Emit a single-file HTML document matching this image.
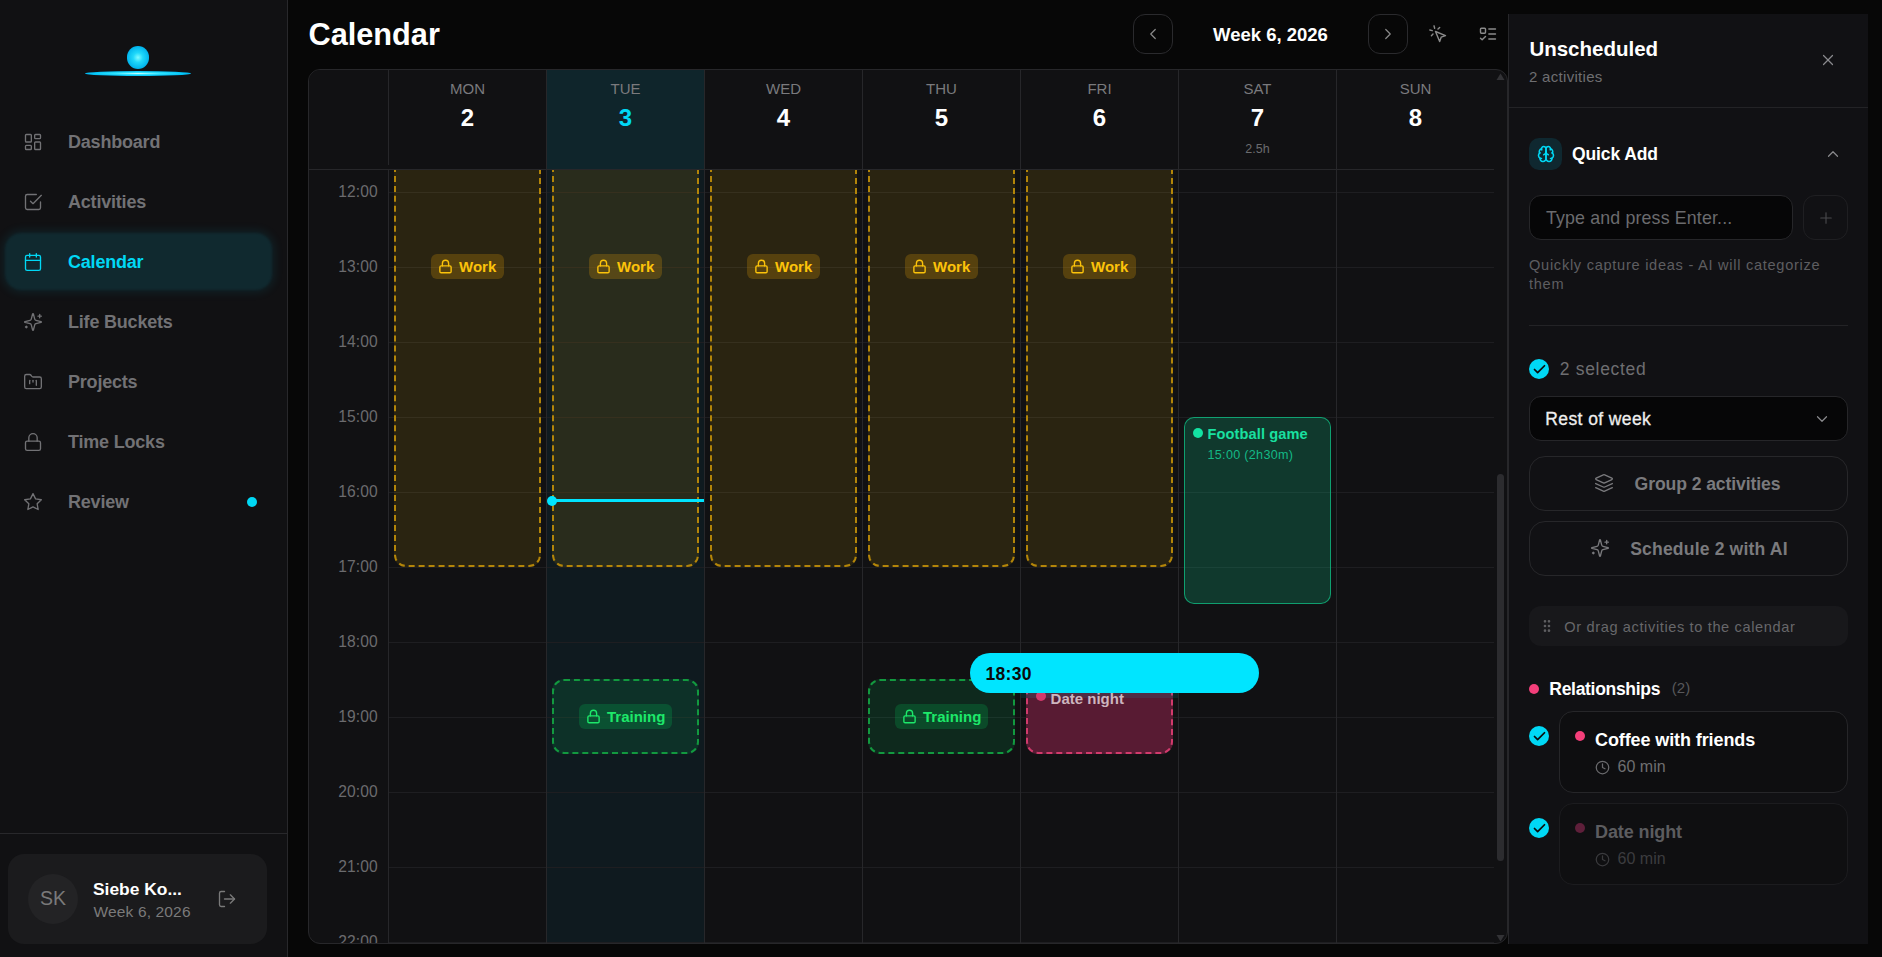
<!DOCTYPE html>
<html><head><meta charset="utf-8"><title>Calendar</title>
<style>
html,body{margin:0;padding:0;width:1882px;height:957px;overflow:hidden;background:#070707;font-family:"Liberation Sans", sans-serif;}
.t{position:absolute;line-height:1;white-space:nowrap;}
svg{display:block}
</style></head><body>
<div style="position:absolute;left:0px;top:0px;width:288px;height:957px;box-sizing:border-box;background:#111113;border-right:1px solid #28282b;"></div>
<div style="position:absolute;left:126.6px;top:46.2px;width:22.6px;height:22.6px;border-radius:50%;background:radial-gradient(circle at 50% 50%,#80faff 0%,#20d8fa 30%,#00b4ec 70%,#0a8ed0 100%);"></div>
<div style="position:absolute;left:85px;top:70.7px;width:106px;height:5px;border-radius:50%;background:radial-gradient(ellipse at 50% 50%,#c8ffff 0%,#30e4ff 30%,#00c0f4 65%,#0a90d8 90%,rgba(8,120,200,0.2) 100%);"></div>
<div style="position:absolute;left:5px;top:233px;width:267px;height:57px;border-radius:16px;background:#10292f;box-shadow:0 0 10px 3px rgba(0,190,220,0.09);filter:blur(1.2px);"></div>
<svg style="position:absolute;left:23.00px;top:132.00px;" width="20" height="20" viewBox="0 0 24 24" fill="none" stroke="#727275" stroke-width="1.6" stroke-linecap="round" stroke-linejoin="round"><rect width="7" height="9" x="3" y="3" rx="1"/><rect width="7" height="5" x="14" y="3" rx="1"/><rect width="7" height="9" x="14" y="12" rx="1"/><rect width="7" height="5" x="3" y="16" rx="1"/></svg>
<div class="t" style="left:68.00px;top:132.76px;font-size:18px;color:#727275;font-weight:700;letter-spacing:-0.2px;">Dashboard</div>
<svg style="position:absolute;left:23.00px;top:192.00px;" width="20" height="20" viewBox="0 0 24 24" fill="none" stroke="#727275" stroke-width="1.6" stroke-linecap="round" stroke-linejoin="round"><polyline points="9 11 12 14 22 4"/><path d="M21 12v7a2 2 0 0 1-2 2H5a2 2 0 0 1-2-2V5a2 2 0 0 1 2-2h11"/></svg>
<div class="t" style="left:68.00px;top:192.76px;font-size:18px;color:#727275;font-weight:700;letter-spacing:-0.2px;">Activities</div>
<svg style="position:absolute;left:23.00px;top:252.00px;" width="20" height="20" viewBox="0 0 24 24" fill="none" stroke="#00d8f5" stroke-width="1.6" stroke-linecap="round" stroke-linejoin="round"><rect width="18" height="18" x="3" y="4" rx="2"/><path d="M16 2v4"/><path d="M8 2v4"/><path d="M3 10h18"/></svg>
<div class="t" style="left:68.00px;top:252.76px;font-size:18px;color:#00d8f5;font-weight:700;letter-spacing:-0.2px;">Calendar</div>
<svg style="position:absolute;left:23.00px;top:312.00px;" width="20" height="20" viewBox="0 0 24 24" fill="none" stroke="#727275" stroke-width="1.6" stroke-linecap="round" stroke-linejoin="round"><path d="M9.937 15.5A2 2 0 0 0 8.5 14.063l-6.135-1.582a.5.5 0 0 1 0-.962L8.5 9.936A2 2 0 0 0 9.937 8.5l1.582-6.135a.5.5 0 0 1 .963 0L14.063 8.5A2 2 0 0 0 15.5 9.937l6.135 1.581a.5.5 0 0 1 0 .964L15.5 14.063a2 2 0 0 0-1.437 1.437l-1.582 6.135a.5.5 0 0 1-.963 0z"/><path d="M20 3v4"/><path d="M22 5h-4"/><path d="M4 17v2"/><path d="M5 18H3"/></svg>
<div class="t" style="left:68.00px;top:312.76px;font-size:18px;color:#727275;font-weight:700;letter-spacing:-0.2px;">Life Buckets</div>
<svg style="position:absolute;left:23.00px;top:372.00px;" width="20" height="20" viewBox="0 0 24 24" fill="none" stroke="#727275" stroke-width="1.6" stroke-linecap="round" stroke-linejoin="round"><path d="M4 20h16a2 2 0 0 0 2-2V8a2 2 0 0 0-2-2h-7.93a2 2 0 0 1-1.66-.9l-.82-1.2A2 2 0 0 0 7.93 3H4a2 2 0 0 0-2 2v13c0 1.1.9 2 2 2Z"/><path d="M8 10v4"/><path d="M12 10v2"/><path d="M16 10v6"/></svg>
<div class="t" style="left:68.00px;top:372.76px;font-size:18px;color:#727275;font-weight:700;letter-spacing:-0.2px;">Projects</div>
<svg style="position:absolute;left:23.00px;top:432.00px;" width="20" height="20" viewBox="0 0 24 24" fill="none" stroke="#727275" stroke-width="1.6" stroke-linecap="round" stroke-linejoin="round"><rect width="18" height="11" x="3" y="11" rx="2" ry="2"/><path d="M7 11V7a5 5 0 0 1 10 0v4"/></svg>
<div class="t" style="left:68.00px;top:432.76px;font-size:18px;color:#727275;font-weight:700;letter-spacing:-0.2px;">Time Locks</div>
<svg style="position:absolute;left:23.00px;top:492.00px;" width="20" height="20" viewBox="0 0 24 24" fill="none" stroke="#727275" stroke-width="1.6" stroke-linecap="round" stroke-linejoin="round"><polygon points="12 2 15.09 8.26 22 9.27 17 14.14 18.18 21.02 12 17.77 5.82 21.02 7 14.14 2 9.27 8.91 8.26 12 2"/></svg>
<div class="t" style="left:68.00px;top:492.76px;font-size:18px;color:#727275;font-weight:700;letter-spacing:-0.2px;">Review</div>
<div style="position:absolute;left:247px;top:497px;width:10px;height:10px;border-radius:50%;background:#00d8f5;"></div>
<div style="position:absolute;left:0px;top:833px;width:287px;height:1px;box-sizing:border-box;background:#28282b;"></div>
<div style="position:absolute;left:8px;top:854px;width:259px;height:90px;box-sizing:border-box;background:#1b1b1d;border-radius:16px;"></div>
<div style="position:absolute;left:28px;top:873.5px;width:50px;height:50px;border-radius:50%;background:#232325;"></div>
<div class="t" style="left:-447.00px;width:1000px;text-align:center;top:888.99px;font-size:19.5px;color:#7a7a7a;font-weight:400;letter-spacing:0px;">SK</div>
<div class="t" style="left:93.00px;top:881.27px;font-size:17.4px;color:#fff;font-weight:700;letter-spacing:0px;">Siebe Ko...</div>
<div class="t" style="left:93.50px;top:903.68px;font-size:15.5px;color:#7a7a7a;font-weight:400;letter-spacing:0.15px;">Week 6, 2026</div>
<svg style="position:absolute;left:217.00px;top:889.00px;" width="20" height="20" viewBox="0 0 24 24" fill="none" stroke="#7a7a7a" stroke-width="1.6" stroke-linecap="round" stroke-linejoin="round"><path d="M9 21H5a2 2 0 0 1-2-2V5a2 2 0 0 1 2-2h4"/><polyline points="16 17 21 12 16 7"/><line x1="21" x2="9" y1="12" y2="12"/></svg>
<div class="t" style="left:308.50px;top:19.81px;font-size:30.7px;color:#fff;font-weight:700;letter-spacing:0px;">Calendar</div>
<div style="position:absolute;left:1133px;top:14px;width:40px;height:40px;box-sizing:border-box;border:1px solid #2a2a2d;border-radius:12px;"></div>
<svg style="position:absolute;left:1144.00px;top:25.00px;" width="18" height="18" viewBox="0 0 24 24" fill="none" stroke="#8a8a8a" stroke-width="1.6" stroke-linecap="round" stroke-linejoin="round"><path d="m15 18-6-6 6-6"/></svg>
<div class="t" style="left:1213.00px;top:25.54px;font-size:18.5px;color:#fff;font-weight:700;letter-spacing:0px;">Week 6, 2026</div>
<div style="position:absolute;left:1368px;top:14px;width:40px;height:40px;box-sizing:border-box;border:1px solid #2a2a2d;border-radius:12px;"></div>
<svg style="position:absolute;left:1379.00px;top:25.00px;" width="18" height="18" viewBox="0 0 24 24" fill="none" stroke="#8a8a8a" stroke-width="1.6" stroke-linecap="round" stroke-linejoin="round"><path d="m9 18 6-6-6-6"/></svg>
<svg style="position:absolute;left:1427.70px;top:23.50px;" width="20" height="20" viewBox="0 0 24 24" fill="none" stroke="#8a8a8a" stroke-width="1.7" stroke-linecap="round" stroke-linejoin="round"><path d="m9 9 5 12 1.8-5.2L21 14Z"/><path d="M7.2 2.2 8 5.1"/><path d="m5.1 8-2.9-.8"/><path d="M14 4.1 12 6"/><path d="m6 12-1.9 2"/></svg>
<svg style="position:absolute;left:1477.50px;top:24.00px;" width="20" height="20" viewBox="0 0 24 24" fill="none" stroke="#8a8a8a" stroke-width="1.7" stroke-linecap="round" stroke-linejoin="round"><rect x="3" y="5" width="6" height="6" rx="1"/><path d="m3 17 2 2 4-4"/><path d="M13 6h8"/><path d="M13 12h8"/><path d="M13 18h8"/></svg>
<div style="position:absolute;left:308px;top:69px;width:1200px;height:875px;box-sizing:border-box;background:#111113;border:1px solid #27272a;border-radius:12px;"></div>
<div style="position:absolute;left:309px;top:70px;width:1198px;height:873px;overflow:hidden;border-radius:11px;">
<div style="position:absolute;left:238px;top:100px;width:157px;height:773px;box-sizing:border-box;background:#0f1a1f;"></div>
<div style="position:absolute;left:80px;top:47px;width:1105px;height:1px;box-sizing:border-box;background:#1e1e21;"></div>
<div style="position:absolute;left:80px;top:122px;width:1105px;height:1px;box-sizing:border-box;background:#1e1e21;"></div>
<div style="position:absolute;left:80px;top:197px;width:1105px;height:1px;box-sizing:border-box;background:#1e1e21;"></div>
<div style="position:absolute;left:80px;top:272px;width:1105px;height:1px;box-sizing:border-box;background:#1e1e21;"></div>
<div style="position:absolute;left:80px;top:347px;width:1105px;height:1px;box-sizing:border-box;background:#1e1e21;"></div>
<div style="position:absolute;left:80px;top:422px;width:1105px;height:1px;box-sizing:border-box;background:#1e1e21;"></div>
<div style="position:absolute;left:80px;top:497px;width:1105px;height:1px;box-sizing:border-box;background:#1e1e21;"></div>
<div style="position:absolute;left:80px;top:572px;width:1105px;height:1px;box-sizing:border-box;background:#1e1e21;"></div>
<div style="position:absolute;left:80px;top:647px;width:1105px;height:1px;box-sizing:border-box;background:#1e1e21;"></div>
<div style="position:absolute;left:80px;top:722px;width:1105px;height:1px;box-sizing:border-box;background:#1e1e21;"></div>
<div style="position:absolute;left:80px;top:797px;width:1105px;height:1px;box-sizing:border-box;background:#1e1e21;"></div>
<div style="position:absolute;left:80px;top:872px;width:1105px;height:1px;box-sizing:border-box;background:#1e1e21;"></div>
<div style="position:absolute;left:79px;top:100px;width:1px;height:773px;box-sizing:border-box;background:#27272a;"></div>
<div style="position:absolute;left:237px;top:100px;width:1px;height:773px;box-sizing:border-box;background:#27272a;"></div>
<div style="position:absolute;left:395px;top:100px;width:1px;height:773px;box-sizing:border-box;background:#27272a;"></div>
<div style="position:absolute;left:553px;top:100px;width:1px;height:773px;box-sizing:border-box;background:#27272a;"></div>
<div style="position:absolute;left:711px;top:100px;width:1px;height:773px;box-sizing:border-box;background:#27272a;"></div>
<div style="position:absolute;left:869px;top:100px;width:1px;height:773px;box-sizing:border-box;background:#27272a;"></div>
<div style="position:absolute;left:1027px;top:100px;width:1px;height:773px;box-sizing:border-box;background:#27272a;"></div>
</div>
<div style="position:absolute;left:309px;top:170px;width:1185px;height:773px;overflow:hidden;">
<div style="position:absolute;left:85px;top:-203px;width:147px;height:600px;box-sizing:border-box;border:2px dashed #b38509;border-radius:12px;background:rgba(234,179,8,0.12);"></div>
<div style="position:absolute;left:122.0px;top:84.0px;width:73px;height:25px;border-radius:6px;background:rgba(230,160,8,0.24);"></div>
<svg style="position:absolute;left:129.3px;top:88.7px" width="15" height="15" viewBox="0 0 24 24" fill="none" stroke="#fcc30a" stroke-width="2.2" stroke-linecap="round" stroke-linejoin="round"><rect width="18" height="11" x="3" y="11" rx="2" ry="2"/><path d="M7 11V7a5 5 0 0 1 10 0v4"/></svg>
<div class="t" style="left:150.0px;top:89.30px;font-size:15px;font-weight:700;color:#fcc30a;">Work</div>
<div style="position:absolute;left:243px;top:-203px;width:147px;height:600px;box-sizing:border-box;border:2px dashed #b38509;border-radius:12px;background:rgba(234,179,8,0.12);"></div>
<div style="position:absolute;left:280.0px;top:84.0px;width:73px;height:25px;border-radius:6px;background:rgba(230,160,8,0.24);"></div>
<svg style="position:absolute;left:287.3px;top:88.7px" width="15" height="15" viewBox="0 0 24 24" fill="none" stroke="#fcc30a" stroke-width="2.2" stroke-linecap="round" stroke-linejoin="round"><rect width="18" height="11" x="3" y="11" rx="2" ry="2"/><path d="M7 11V7a5 5 0 0 1 10 0v4"/></svg>
<div class="t" style="left:308.0px;top:89.30px;font-size:15px;font-weight:700;color:#fcc30a;">Work</div>
<div style="position:absolute;left:401px;top:-203px;width:147px;height:600px;box-sizing:border-box;border:2px dashed #b38509;border-radius:12px;background:rgba(234,179,8,0.12);"></div>
<div style="position:absolute;left:438.0px;top:84.0px;width:73px;height:25px;border-radius:6px;background:rgba(230,160,8,0.24);"></div>
<svg style="position:absolute;left:445.3px;top:88.7px" width="15" height="15" viewBox="0 0 24 24" fill="none" stroke="#fcc30a" stroke-width="2.2" stroke-linecap="round" stroke-linejoin="round"><rect width="18" height="11" x="3" y="11" rx="2" ry="2"/><path d="M7 11V7a5 5 0 0 1 10 0v4"/></svg>
<div class="t" style="left:466.0px;top:89.30px;font-size:15px;font-weight:700;color:#fcc30a;">Work</div>
<div style="position:absolute;left:559px;top:-203px;width:147px;height:600px;box-sizing:border-box;border:2px dashed #b38509;border-radius:12px;background:rgba(234,179,8,0.12);"></div>
<div style="position:absolute;left:596.0px;top:84.0px;width:73px;height:25px;border-radius:6px;background:rgba(230,160,8,0.24);"></div>
<svg style="position:absolute;left:603.3px;top:88.7px" width="15" height="15" viewBox="0 0 24 24" fill="none" stroke="#fcc30a" stroke-width="2.2" stroke-linecap="round" stroke-linejoin="round"><rect width="18" height="11" x="3" y="11" rx="2" ry="2"/><path d="M7 11V7a5 5 0 0 1 10 0v4"/></svg>
<div class="t" style="left:624.0px;top:89.30px;font-size:15px;font-weight:700;color:#fcc30a;">Work</div>
<div style="position:absolute;left:717px;top:-203px;width:147px;height:600px;box-sizing:border-box;border:2px dashed #b38509;border-radius:12px;background:rgba(234,179,8,0.12);"></div>
<div style="position:absolute;left:754.0px;top:84.0px;width:73px;height:25px;border-radius:6px;background:rgba(230,160,8,0.24);"></div>
<svg style="position:absolute;left:761.3px;top:88.7px" width="15" height="15" viewBox="0 0 24 24" fill="none" stroke="#fcc30a" stroke-width="2.2" stroke-linecap="round" stroke-linejoin="round"><rect width="18" height="11" x="3" y="11" rx="2" ry="2"/><path d="M7 11V7a5 5 0 0 1 10 0v4"/></svg>
<div class="t" style="left:782.0px;top:89.30px;font-size:15px;font-weight:700;color:#fcc30a;">Work</div>
<div style="position:absolute;left:243px;top:509px;width:147px;height:75px;box-sizing:border-box;border:2px dashed #12993f;border-radius:12px;background:rgba(0,225,110,0.12);"></div>
<div style="position:absolute;left:270.0px;top:534.0px;width:93px;height:25px;border-radius:6px;background:rgba(0,210,90,0.2);"></div>
<svg style="position:absolute;left:277.3px;top:538.7px" width="15" height="15" viewBox="0 0 24 24" fill="none" stroke="#1de86a" stroke-width="2.2" stroke-linecap="round" stroke-linejoin="round"><rect width="18" height="11" x="3" y="11" rx="2" ry="2"/><path d="M7 11V7a5 5 0 0 1 10 0v4"/></svg>
<div class="t" style="left:298.0px;top:539.30px;font-size:15px;font-weight:700;color:#1de86a;">Training</div>
<div style="position:absolute;left:559px;top:509px;width:147px;height:75px;box-sizing:border-box;border:2px dashed #12993f;border-radius:12px;background:rgba(0,225,110,0.12);"></div>
<div style="position:absolute;left:586.0px;top:534.0px;width:93px;height:25px;border-radius:6px;background:rgba(0,210,90,0.2);"></div>
<svg style="position:absolute;left:593.3px;top:538.7px" width="15" height="15" viewBox="0 0 24 24" fill="none" stroke="#1de86a" stroke-width="2.2" stroke-linecap="round" stroke-linejoin="round"><rect width="18" height="11" x="3" y="11" rx="2" ry="2"/><path d="M7 11V7a5 5 0 0 1 10 0v4"/></svg>
<div class="t" style="left:614.0px;top:539.30px;font-size:15px;font-weight:700;color:#1de86a;">Training</div>
<div style="position:absolute;left:717px;top:509px;width:147px;height:75px;box-sizing:border-box;border:2px dashed #d13a6c;border-radius:12px;background:#581b33;"></div>
<div style="position:absolute;left:712px;top:523px;width:157px;height:5px;box-sizing:border-box;background:rgba(0,229,255,0.09);"></div>
<div style="position:absolute;left:727px;top:521px;width:10px;height:10px;border-radius:50%;background:#d23a6c;"></div>
<div class="t" style="left:741.60px;top:521.30px;font-size:15px;color:#cdb5bf;font-weight:700;letter-spacing:0px;">Date night</div>
<div style="position:absolute;left:875px;top:247px;width:147px;height:186.5px;box-sizing:border-box;border:1px solid rgba(16,185,129,0.8);border-radius:10px;background:rgba(16,185,129,0.245);"></div>
<div style="position:absolute;left:884px;top:258px;width:10px;height:10px;border-radius:50%;background:#13e2a2;"></div>
<div class="t" style="left:898.50px;top:257.44px;font-size:14.6px;color:#19e0a0;font-weight:700;letter-spacing:0.1px;">Football game</div>
<div class="t" style="left:898.50px;top:279.13px;font-size:12.6px;color:#14b886;font-weight:400;letter-spacing:0.3px;">15:00 (2h30m)</div>
<div style="position:absolute;left:243px;top:329px;width:152px;height:3px;box-sizing:border-box;background:#00e5ff;"></div>
<div style="position:absolute;left:238px;top:326px;width:10px;height:10px;border-radius:50%;background:#00e5ff;"></div>
<div style="position:absolute;left:661px;top:483px;width:289px;height:40px;box-sizing:border-box;background:#00e5ff;border-radius:20px;"></div>
<div class="t" style="left:676.50px;top:495.69px;font-size:17.5px;color:#0b0b0b;font-weight:700;letter-spacing:0.3px;">18:30</div>
<div class="t" style="left:-931.40px;width:1000px;text-align:right;top:13.79px;font-size:15.6px;color:#6b6b6e;font-weight:400;letter-spacing:0.05px;">12:00</div>
<div class="t" style="left:-931.40px;width:1000px;text-align:right;top:88.79px;font-size:15.6px;color:#6b6b6e;font-weight:400;letter-spacing:0.05px;">13:00</div>
<div class="t" style="left:-931.40px;width:1000px;text-align:right;top:163.79px;font-size:15.6px;color:#6b6b6e;font-weight:400;letter-spacing:0.05px;">14:00</div>
<div class="t" style="left:-931.40px;width:1000px;text-align:right;top:238.79px;font-size:15.6px;color:#6b6b6e;font-weight:400;letter-spacing:0.05px;">15:00</div>
<div class="t" style="left:-931.40px;width:1000px;text-align:right;top:313.79px;font-size:15.6px;color:#6b6b6e;font-weight:400;letter-spacing:0.05px;">16:00</div>
<div class="t" style="left:-931.40px;width:1000px;text-align:right;top:388.79px;font-size:15.6px;color:#6b6b6e;font-weight:400;letter-spacing:0.05px;">17:00</div>
<div class="t" style="left:-931.40px;width:1000px;text-align:right;top:463.79px;font-size:15.6px;color:#6b6b6e;font-weight:400;letter-spacing:0.05px;">18:00</div>
<div class="t" style="left:-931.40px;width:1000px;text-align:right;top:538.79px;font-size:15.6px;color:#6b6b6e;font-weight:400;letter-spacing:0.05px;">19:00</div>
<div class="t" style="left:-931.40px;width:1000px;text-align:right;top:613.79px;font-size:15.6px;color:#6b6b6e;font-weight:400;letter-spacing:0.05px;">20:00</div>
<div class="t" style="left:-931.40px;width:1000px;text-align:right;top:688.79px;font-size:15.6px;color:#6b6b6e;font-weight:400;letter-spacing:0.05px;">21:00</div>
<div class="t" style="left:-931.40px;width:1000px;text-align:right;top:763.79px;font-size:15.6px;color:#6b6b6e;font-weight:400;letter-spacing:0.05px;">22:00</div>
</div>
<div style="position:absolute;left:309px;top:70px;width:1185px;height:100px;overflow:hidden;border-top-left-radius:11px;background:#111113;">
<div style="position:absolute;left:238px;top:0px;width:157px;height:99px;box-sizing:border-box;background:#0f252b;"></div>
<div style="position:absolute;left:0px;top:99px;width:1185px;height:1px;box-sizing:border-box;background:#27272a;"></div>
<div style="position:absolute;left:79px;top:0px;width:1px;height:95px;box-sizing:border-box;background:#27272a;"></div>
<div style="position:absolute;left:237px;top:0px;width:1px;height:99px;box-sizing:border-box;background:#27272a;"></div>
<div style="position:absolute;left:395px;top:0px;width:1px;height:99px;box-sizing:border-box;background:#27272a;"></div>
<div style="position:absolute;left:553px;top:0px;width:1px;height:99px;box-sizing:border-box;background:#27272a;"></div>
<div style="position:absolute;left:711px;top:0px;width:1px;height:99px;box-sizing:border-box;background:#27272a;"></div>
<div style="position:absolute;left:869px;top:0px;width:1px;height:99px;box-sizing:border-box;background:#27272a;"></div>
<div style="position:absolute;left:1027px;top:0px;width:1px;height:99px;box-sizing:border-box;background:#27272a;"></div>
</div>
<div class="t" style="left:-32.50px;width:1000px;text-align:center;top:81.00px;font-size:15px;color:#7a7a7d;font-weight:400;letter-spacing:0px;">MON</div>
<div class="t" style="left:-32.50px;width:1000px;text-align:center;top:105.98px;font-size:24px;color:#fff;font-weight:700;letter-spacing:0px;">2</div>
<div class="t" style="left:125.50px;width:1000px;text-align:center;top:81.00px;font-size:15px;color:#7a7a7d;font-weight:400;letter-spacing:0px;">TUE</div>
<div class="t" style="left:125.50px;width:1000px;text-align:center;top:105.98px;font-size:24px;color:#00d8f5;font-weight:700;letter-spacing:0px;">3</div>
<div class="t" style="left:283.50px;width:1000px;text-align:center;top:81.00px;font-size:15px;color:#7a7a7d;font-weight:400;letter-spacing:0px;">WED</div>
<div class="t" style="left:283.50px;width:1000px;text-align:center;top:105.98px;font-size:24px;color:#fff;font-weight:700;letter-spacing:0px;">4</div>
<div class="t" style="left:441.50px;width:1000px;text-align:center;top:81.00px;font-size:15px;color:#7a7a7d;font-weight:400;letter-spacing:0px;">THU</div>
<div class="t" style="left:441.50px;width:1000px;text-align:center;top:105.98px;font-size:24px;color:#fff;font-weight:700;letter-spacing:0px;">5</div>
<div class="t" style="left:599.50px;width:1000px;text-align:center;top:81.00px;font-size:15px;color:#7a7a7d;font-weight:400;letter-spacing:0px;">FRI</div>
<div class="t" style="left:599.50px;width:1000px;text-align:center;top:105.98px;font-size:24px;color:#fff;font-weight:700;letter-spacing:0px;">6</div>
<div class="t" style="left:757.50px;width:1000px;text-align:center;top:81.00px;font-size:15px;color:#7a7a7d;font-weight:400;letter-spacing:0px;">SAT</div>
<div class="t" style="left:757.50px;width:1000px;text-align:center;top:105.98px;font-size:24px;color:#fff;font-weight:700;letter-spacing:0px;">7</div>
<div class="t" style="left:915.50px;width:1000px;text-align:center;top:81.00px;font-size:15px;color:#7a7a7d;font-weight:400;letter-spacing:0px;">SUN</div>
<div class="t" style="left:915.50px;width:1000px;text-align:center;top:105.98px;font-size:24px;color:#fff;font-weight:700;letter-spacing:0px;">8</div>
<div class="t" style="left:757.50px;width:1000px;text-align:center;top:143.22px;font-size:12.5px;color:#6b6b6e;font-weight:400;letter-spacing:0px;">2.5h</div>
<div style="position:absolute;left:1497px;top:474px;width:7px;height:387px;box-sizing:border-box;background:#2c2c2f;border-radius:4px;"></div>
<svg style="position:absolute;left:1496px;top:73px" width="9" height="8"><polygon points="4.5,0.5 8.5,7 0.5,7" fill="#333336"/></svg>
<svg style="position:absolute;left:1496px;top:934px" width="9" height="8"><polygon points="0.5,1 8.5,1 4.5,7.5" fill="#333336"/></svg>
<div style="position:absolute;left:1508px;top:14px;width:360px;height:930px;box-sizing:border-box;background:#111114;border-left:1px solid #27272a;"></div>
<div class="t" style="left:1529.40px;top:38.75px;font-size:20.5px;color:#fff;font-weight:700;letter-spacing:0px;">Unscheduled</div>
<div class="t" style="left:1529.00px;top:69.00px;font-size:15px;color:#6e6e71;font-weight:400;letter-spacing:0.3px;">2 activities</div>
<svg style="position:absolute;left:1819.00px;top:51.00px;" width="18" height="18" viewBox="0 0 24 24" fill="none" stroke="#8a8a8d" stroke-width="1.6" stroke-linecap="round" stroke-linejoin="round"><path d="M18 6 6 18"/><path d="m6 6 12 12"/></svg>
<div style="position:absolute;left:1509px;top:107px;width:359px;height:1px;box-sizing:border-box;background:#232326;"></div>
<div style="position:absolute;left:1529px;top:138px;width:33px;height:32px;box-sizing:border-box;background:#0f2830;border-radius:10px;"></div>
<svg style="position:absolute;left:1536.80px;top:145.00px;" width="18" height="18" viewBox="0 0 24 24" fill="none" stroke="#00d8f5" stroke-width="2.1" stroke-linecap="round" stroke-linejoin="round"><path d="M12 5a3 3 0 1 0-5.997.125 4 4 0 0 0-2.526 5.77 4 4 0 0 0 .556 6.588A4 4 0 1 0 12 18Z"/><path d="M12 5a3 3 0 1 1 5.997.125 4 4 0 0 1 2.526 5.77 4 4 0 0 1-.556 6.588A4 4 0 1 1 12 18Z"/><path d="M15 13a4.5 4.5 0 0 1-3-4 4.5 4.5 0 0 1-3 4"/><path d="M17.599 6.5a3 3 0 0 0 .399-1.375"/><path d="M6.003 5.125A3 3 0 0 0 6.401 6.5"/><path d="M3.477 10.896a4 4 0 0 1 .585-.396"/><path d="M19.938 10.5a4 4 0 0 1 .585.396"/><path d="M6 18a4 4 0 0 1-1.967-.516"/><path d="M19.967 17.484A4 4 0 0 1 18 18"/></svg>
<div class="t" style="left:1572.00px;top:145.79px;font-size:17.5px;color:#fff;font-weight:700;letter-spacing:-0.1px;">Quick Add</div>
<svg style="position:absolute;left:1824.00px;top:145.00px;" width="18" height="18" viewBox="0 0 24 24" fill="none" stroke="#8a8a8d" stroke-width="1.6" stroke-linecap="round" stroke-linejoin="round"><path d="m18 15-6-6-6 6"/></svg>
<div style="position:absolute;left:1529px;top:195px;width:264px;height:45px;box-sizing:border-box;background:#060607;border:1px solid #262629;border-radius:12px;"></div>
<div class="t" style="left:1546.00px;top:209.73px;font-size:17.8px;color:#6b6b6e;font-weight:400;letter-spacing:0.15px;">Type and press Enter...</div>
<div style="position:absolute;left:1803px;top:195px;width:45px;height:45px;box-sizing:border-box;border:1px solid #1f1f22;border-radius:12px;"></div>
<svg style="position:absolute;left:1817.00px;top:209.00px;" width="18" height="18" viewBox="0 0 24 24" fill="none" stroke="#4a4a4d" stroke-width="1.5" stroke-linecap="round" stroke-linejoin="round"><path d="M5 12h14"/><path d="M12 5v14"/></svg>
<div class="t" style="left:1529.00px;top:257.64px;font-size:14.6px;color:#5e5e61;font-weight:400;letter-spacing:0.72px;">Quickly capture ideas - AI will categorize</div>
<div class="t" style="left:1529.00px;top:277.14px;font-size:14.6px;color:#5e5e61;font-weight:400;letter-spacing:0.72px;">them</div>
<div style="position:absolute;left:1529px;top:325px;width:319px;height:1px;box-sizing:border-box;background:#232326;"></div>
<div style="position:absolute;left:1529px;top:359px;width:20px;height:20px;border-radius:50%;background:#00d8f5;"></div>
<svg style="position:absolute;left:1531.50px;top:362.00px;" width="15" height="15" viewBox="0 0 24 24" fill="none" stroke="#0b0b0b" stroke-width="2.8" stroke-linecap="round" stroke-linejoin="round"><path d="M20 6 9 17l-5-5"/></svg>
<div class="t" style="left:1559.70px;top:360.99px;font-size:17.5px;color:#6e6e71;font-weight:400;letter-spacing:0.7px;">2 selected</div>
<div style="position:absolute;left:1529px;top:396px;width:319px;height:45px;box-sizing:border-box;background:#060607;border:1px solid #262629;border-radius:12px;"></div>
<div class="t" style="left:1545.30px;top:410.69px;font-size:17.5px;color:#eeeeee;font-weight:400;letter-spacing:0.4px;-webkit-text-stroke:0.3px #eeeeee;">Rest of week</div>
<svg style="position:absolute;left:1813.00px;top:410.00px;" width="18" height="18" viewBox="0 0 24 24" fill="none" stroke="#8a8a8d" stroke-width="1.6" stroke-linecap="round" stroke-linejoin="round"><path d="m6 9 6 6 6-6"/></svg>
<div style="position:absolute;left:1529px;top:456px;width:319px;height:55px;box-sizing:border-box;border:1px solid #27272a;border-radius:16px;"></div>
<svg style="position:absolute;left:1594.00px;top:473.00px;" width="20" height="20" viewBox="0 0 24 24" fill="none" stroke="#7a7a7d" stroke-width="1.6" stroke-linecap="round" stroke-linejoin="round"><path d="m12.83 2.18a2 2 0 0 0-1.66 0L2.6 6.08a1 1 0 0 0 0 1.83l8.58 3.91a2 2 0 0 0 1.66 0l8.58-3.9a1 1 0 0 0 0-1.83Z"/><path d="m22 17.65-9.17 4.16a2 2 0 0 1-1.66 0L2 17.65"/><path d="m22 12.65-9.17 4.16a2 2 0 0 1-1.66 0L2 12.65"/></svg>
<div class="t" style="left:1634.60px;top:476.10px;font-size:17.6px;color:#7a7a7d;font-weight:700;letter-spacing:-0.1px;">Group 2 activities</div>
<div style="position:absolute;left:1529px;top:521px;width:319px;height:55px;box-sizing:border-box;border:1px solid #27272a;border-radius:16px;"></div>
<svg style="position:absolute;left:1590.00px;top:538.00px;" width="20" height="20" viewBox="0 0 24 24" fill="none" stroke="#7a7a7d" stroke-width="1.6" stroke-linecap="round" stroke-linejoin="round"><path d="M9.937 15.5A2 2 0 0 0 8.5 14.063l-6.135-1.582a.5.5 0 0 1 0-.962L8.5 9.936A2 2 0 0 0 9.937 8.5l1.582-6.135a.5.5 0 0 1 .963 0L14.063 8.5A2 2 0 0 0 15.5 9.937l6.135 1.581a.5.5 0 0 1 0 .964L15.5 14.063a2 2 0 0 0-1.437 1.437l-1.582 6.135a.5.5 0 0 1-.963 0z"/><path d="M20 3v4"/><path d="M22 5h-4"/><path d="M4 17v2"/><path d="M5 18H3"/></svg>
<div class="t" style="left:1630.20px;top:541.10px;font-size:17.6px;color:#7a7a7d;font-weight:700;letter-spacing:0.15px;">Schedule 2 with AI</div>
<div style="position:absolute;left:1529px;top:606px;width:319px;height:40px;box-sizing:border-box;background:#18181b;border-radius:12px;"></div>
<svg style="position:absolute;left:1538.60px;top:618.00px;" width="16" height="16" viewBox="0 0 24 24" fill="none" stroke="#5e5e61" stroke-width="2" stroke-linecap="round" stroke-linejoin="round"><circle cx="9" cy="12" r="1"/><circle cx="9" cy="5" r="1"/><circle cx="9" cy="19" r="1"/><circle cx="15" cy="12" r="1"/><circle cx="15" cy="5" r="1"/><circle cx="15" cy="19" r="1"/></svg>
<div class="t" style="left:1564.30px;top:619.84px;font-size:14.6px;color:#67676a;font-weight:400;letter-spacing:0.62px;">Or drag activities to the calendar</div>
<div style="position:absolute;left:1529px;top:684px;width:10px;height:10px;border-radius:50%;background:#f43f7a;"></div>
<div class="t" style="left:1549.30px;top:680.79px;font-size:17.5px;color:#fff;font-weight:700;letter-spacing:-0.3px;">Relationships</div>
<div class="t" style="left:1671.80px;top:679.60px;font-size:15px;color:#58585b;font-weight:400;letter-spacing:0px;">(2)</div>
<div style="position:absolute;left:1529px;top:726px;width:20px;height:20px;border-radius:50%;background:#00d8f5;"></div>
<svg style="position:absolute;left:1531.50px;top:729.00px;" width="15" height="15" viewBox="0 0 24 24" fill="none" stroke="#0b0b0b" stroke-width="2.8" stroke-linecap="round" stroke-linejoin="round"><path d="M20 6 9 17l-5-5"/></svg>
<div style="position:absolute;left:1559px;top:711px;width:289px;height:82px;box-sizing:border-box;background:#0e0e10;border:1px solid #262629;border-radius:14px;"></div>
<div style="position:absolute;left:1575px;top:730.5px;width:10px;height:10px;border-radius:50%;background:#f43f7a;"></div>
<div class="t" style="left:1595.00px;top:731.06px;font-size:18px;color:#fff;font-weight:700;letter-spacing:-0.1px;">Coffee with friends</div>
<svg style="position:absolute;left:1595.00px;top:759.50px;" width="15" height="15" viewBox="0 0 24 24" fill="none" stroke="#6a6a6d" stroke-width="2" stroke-linecap="round" stroke-linejoin="round"><circle cx="12" cy="12" r="10"/><polyline points="12 6 12 12 16 14"/></svg>
<div class="t" style="left:1617.60px;top:758.96px;font-size:16px;color:#6e6e71;font-weight:400;letter-spacing:0px;">60 min</div>
<div style="position:absolute;left:1529px;top:818px;width:20px;height:20px;border-radius:50%;background:#00d8f5;"></div>
<svg style="position:absolute;left:1531.50px;top:821.00px;" width="15" height="15" viewBox="0 0 24 24" fill="none" stroke="#0b0b0b" stroke-width="2.8" stroke-linecap="round" stroke-linejoin="round"><path d="M20 6 9 17l-5-5"/></svg>
<div style="position:absolute;left:1559px;top:803px;width:289px;height:82px;box-sizing:border-box;background:#0f0f11;border:1px solid #1c1c1f;border-radius:14px;"></div>
<div style="position:absolute;left:1575px;top:822.5px;width:10px;height:10px;border-radius:50%;background:#5e1f3a;"></div>
<div class="t" style="left:1595.00px;top:823.06px;font-size:18px;color:#5c5c5f;font-weight:700;letter-spacing:-0.1px;">Date night</div>
<svg style="position:absolute;left:1595.00px;top:851.50px;" width="15" height="15" viewBox="0 0 24 24" fill="none" stroke="#3a3a3d" stroke-width="2" stroke-linecap="round" stroke-linejoin="round"><circle cx="12" cy="12" r="10"/><polyline points="12 6 12 12 16 14"/></svg>
<div class="t" style="left:1617.60px;top:850.96px;font-size:16px;color:#3c3c3f;font-weight:400;letter-spacing:0px;">60 min</div>
</body></html>
